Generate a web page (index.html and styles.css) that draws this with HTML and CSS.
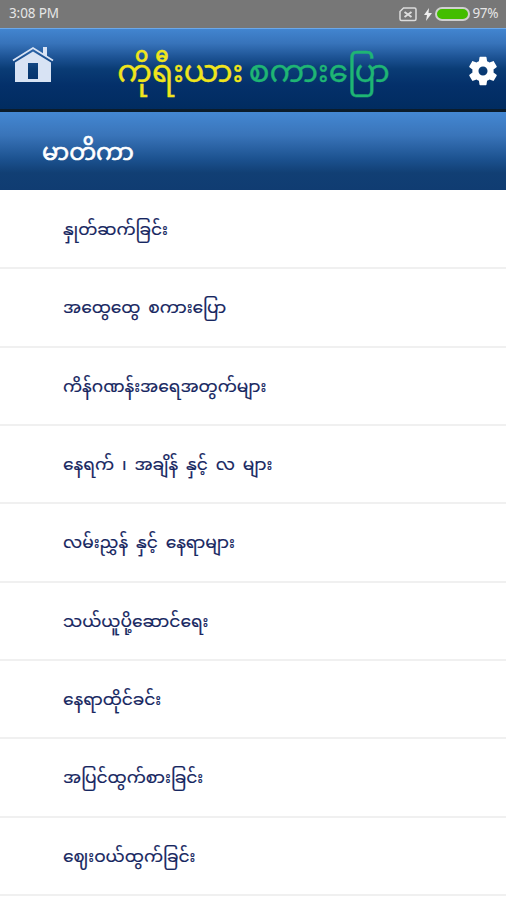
FILE: index.html
```html
<!DOCTYPE html>
<html lang="my">
<head>
    <meta charset="UTF-8">
    <meta name="viewport" content="width=device-width, initial-scale=1.0">
    <title>ကိုရီးယား စကားပြော</title>
    <link rel="stylesheet" href="styles.css">
</head>
<body>

<div class="status">
    <span class="time">3:08 PM</span>
    <svg class="sim" width="18" height="15" viewBox="0 0 18 15" fill="none" stroke="#dcdcdc">
        <path d="M4.5 1H15.5Q17 1 17 2.500V12Q17 13.500 15.500 13.500H2.500Q1 13.500 1 12V4.500Z" stroke-width="1.500"/>
        <path d="M5.500 5L12.500 10M12.500 5L5.500 10" stroke-width="2"/>
    </svg>
    <svg class="bolt" width="8" height="13" viewBox="0 0 8 13" fill="#eee">
        <path d="M5 0L0 7H3L2 13L8 5H4.500Z"/>
    </svg>
    <span class="battery"></span>
    <span class="percent">97%</span>
</div>

<header class="header">
    <svg class="home" width="42" height="38" viewBox="0 0 42 38">
        <path d="M31 8V1H35V11" fill="#d8e3f4"/>
        <path d="M1 14.500L21 2L41 14.500" fill="none" stroke="#d8e3f4" stroke-width="1.800"/>
        <path d="M3 16.500L21 5.500L39 16.500V36H3ZM16 17V33H26V17Z" fill="#d8e3f4" fill-rule="evenodd"/>
    </svg>
    <h1 class="title"><span class="korea">ကိုရီးယား</span> <span class="speak">စကားပြော</span></h1>
    <svg class="gear" width="34" height="34" viewBox="0 0 24 24" fill="#fff">
        <path d="M19.430 12.980c.04-.32.07-.64.07-.98s-.03-.66-.07-.98l2.110-1.650c.19-.15.24-.42.12-.64l-2-3.460c-.12-.22-.39-.3-.61-.22l-2.490 1c-.52-.4-1.080-.73-1.690-.98l-.38-2.650C14.460 2.180 14.250 2 14 2h-4c-.25 0-.46.18-.49.42l-.38 2.650c-.61.25-1.170.59-1.690.98l-2.490-1c-.23-.09-.49 0-.61.22l-2 3.460c-.13.22-.07.49.12.64l2.110 1.650c-.04.32-.07.65-.07.98s.03.66.07.98l-2.110 1.650c-.19.15-.24.42-.12.64l2 3.460c.12.22.39.3.61.22l2.490-1c.52.4 1.080.73 1.690.98l.38 2.650c.03.24.24.42.49.42h4c.25 0 .46-.18.49-.42l.38-2.650c.61-.25 1.170-.59 1.690-.98l2.490 1c.23.09.49 0 .61-.22l2-3.460c.12-.22.07-.49-.12-.64l-2.110-1.650zM12 15.200c-1.770 0-3.200-1.430-3.200-3.200s1.430-3.200 3.200-3.200 3.200 1.430 3.200 3.200-1.430 3.200-3.200 3.200z"/>
    </svg>
</header>

<h2 class="section">မာတိကာ</h2>

<ul class="menu">
    <li>နှုတ်ဆက်ခြင်း</li>
    <li>အထွေထွေ စကားပြော</li>
    <li>ကိန်ဂဏန်းအရေအတွက်များ</li>
    <li>နေရက် ၊ အချိန် နှင့် လ များ</li>
    <li>လမ်းညွှန် နှင့် နေရာများ</li>
    <li>သယ်ယူပို့ဆောင်ရေး</li>
    <li>နေရာထိုင်ခင်း</li>
    <li>အပြင်ထွက်စားခြင်း</li>
    <li>ဈေးဝယ်ထွက်ခြင်း</li>
</ul>

</body>
</html>
```
FILE: styles.css
```css
* {
    box-sizing: border-box;
}
body {
    margin: 0;
    height: 900px;
    overflow: hidden;
    background-color: #fff;
    font-family: "Noto Sans Myanmar", "Myanmar Text", Padauk, "Noto Sans", sans-serif;
}
.status {
    display: flex;
    align-items: center;
    height: 28px;
    padding: 0 8px 0 9px;
    background-color: #777;
    color: #e6e6e6;
    font-family: "Noto Sans", sans-serif;
    font-size: 13.5px;
    letter-spacing: -0.1px;
}
.time {
    flex: 1;
    padding-bottom: 2px;
}
.sim {
    margin-right: 7px;
}
.bolt {
    margin-right: 3px;
}
.battery {
    width: 35px;
    height: 14px;
    margin: 0 3px 0 0;
    border: 2px solid #d0d0d0;
    border-radius: 7px;
    background-color: #43bd00;
}
.percent {
    padding-bottom: 2px;
    letter-spacing: -0.4px;
}
.header {
    display: flex;
    align-items: center;
    justify-content: space-between;
    height: 84px;
    padding: 0 6px 0 12px;
    border-top: 1px solid #6ba8ea;
    border-bottom: 3px solid #0b1c2b;
    background: linear-gradient(#4285d0, #3773ba 18%, #1c5293 36%, #0a3c75 50%, #04306a 70%, #012c60);
}
.home {
    margin-bottom: 9px;
}
.gear {
    margin-top: 3px;
}
.title {
    margin: 12px 13px 0 0;
    font-size: 30.8px;
    font-weight: normal;
    line-height: 1;
    white-space: nowrap;
    word-spacing: -2.5px;
    -webkit-text-stroke: 0.4px;
}
.korea {
    color: #f0e51c;
}
.speak {
    color: #1fb574;
}
.section {
    display: flex;
    align-items: center;
    height: 78px;
    margin: 0;
    padding: 7px 0 0 42px;
    background: linear-gradient(#4488d3, #3974b9 30%, #1c5290 60%, #113f74 78%, #103c72);
    color: #fff;
    font-size: 24px;
    font-weight: normal;
    -webkit-text-stroke: 0.6px;
}
.menu {
    margin: 0;
    padding: 1px 0 0;
    list-style: none;
}
.menu li {
    display: flex;
    align-items: center;
    height: 78.330px;
    padding: 4px 0 0 63px;
    border-bottom: 2px solid #f0f0f0;
    color: #16265f;
    font-size: 17px;
    word-spacing: 3.5px;
    white-space: pre;
    -webkit-text-stroke: 0.2px;
}
```
